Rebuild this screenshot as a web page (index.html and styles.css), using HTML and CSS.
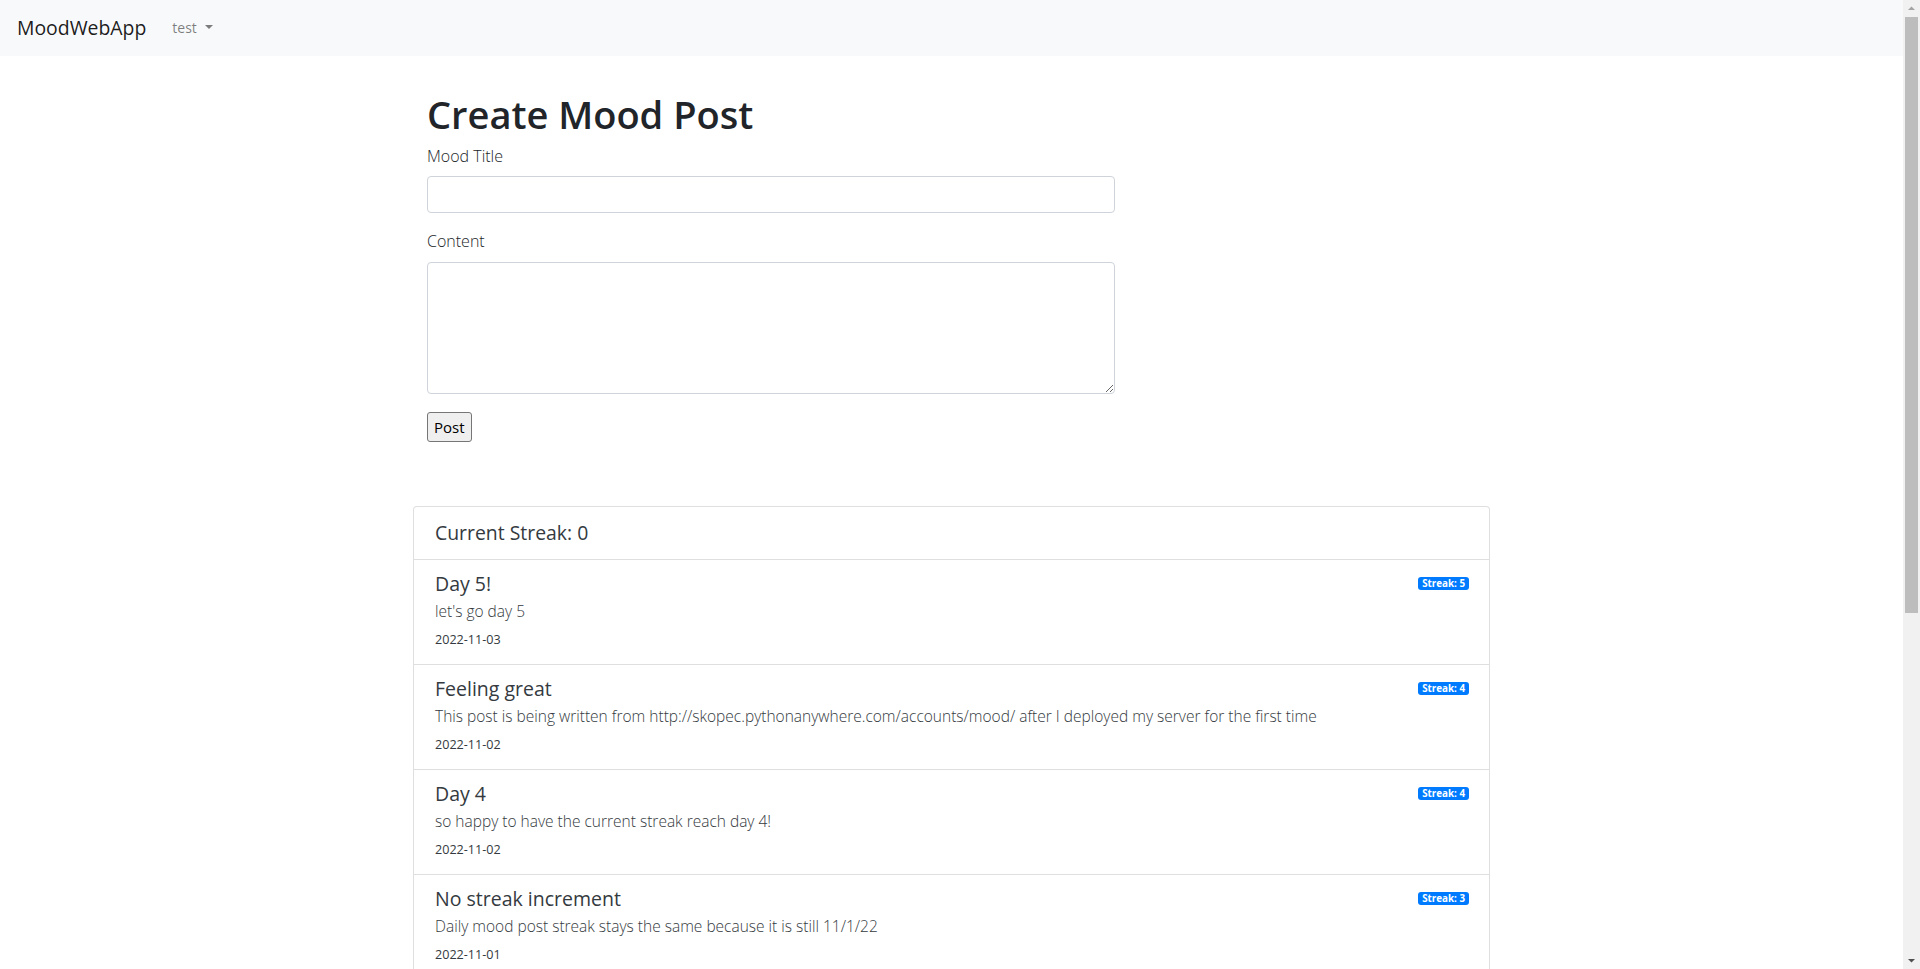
FILE: index.html
```html
<!DOCTYPE html>
<html lang="en">
<head>
<meta charset="utf-8">
<title>MoodWebApp</title>
<link rel="stylesheet" href="styles.css">
</head>
<body>
<nav class="navbar">
  <a class="brand" href="#">MoodWebApp</a>
  <a class="nav-link" href="#">test<span class="caret"></span></a>
</nav>

<main class="page">
  <section class="compose">
    <h1 class="page-title">Create Mood Post</h1>
    <form class="mood-form">
      <label class="field-label" for="title">Mood Title</label>
      <input class="field-input" type="text" id="title" name="title">
      <label class="field-label field-label-second" for="content">Content</label>
      <textarea class="field-area" id="content" name="content"></textarea>
      <button class="post-btn" type="button">Post</button>
    </form>
  </section>

  <section class="card">
    <div class="card-header">Current Streak: 0</div>
    <ul class="post-list">
      <li class="post-item">
        <div class="post-head"><h5 class="post-title">Day 5!</h5><span class="badge">Streak: 5</span></div>
        <p class="post-body">let's go day 5</p>
        <small class="post-date">2022-11-03</small>
      </li>
      <li class="post-item">
        <div class="post-head"><h5 class="post-title">Feeling great</h5><span class="badge">Streak: 4</span></div>
        <p class="post-body">This post is being written from http://skopec.pythonanywhere.com/accounts/mood/ after I deployed my server for the first time</p>
        <small class="post-date">2022-11-02</small>
      </li>
      <li class="post-item">
        <div class="post-head"><h5 class="post-title">Day 4</h5><span class="badge">Streak: 4</span></div>
        <p class="post-body">so happy to have the current streak reach day 4!</p>
        <small class="post-date">2022-11-02</small>
      </li>
      <li class="post-item">
        <div class="post-head"><h5 class="post-title">No streak increment</h5><span class="badge">Streak: 3</span></div>
        <p class="post-body">Daily mood post streak stays the same because it is still 11/1/22</p>
        <small class="post-date">2022-11-01</small>
      </li>
    </ul>
  </section>
</main>

<div class="scrollbar" aria-hidden="true">
  <div class="sb-button">
    <svg width="17" height="17" viewBox="0 0 17 17"><path d="M5 10 L8.5 6.5 L12 10 Z" fill="#a3a3a3"/></svg>
  </div>
  <div class="sb-track"><div class="sb-thumb"></div></div>
  <div class="sb-button">
    <svg width="17" height="17" viewBox="0 0 17 17"><path d="M5 7 L8.5 10.5 L12 7 Z" fill="#505050"/></svg>
  </div>
</div>
</body>
</html>
```

FILE: styles.css
```css
body {
  margin: 0 17px 0 0;
  font-family: "Open Sans", "Noto Sans", sans-serif;
  font-size: 15.5px;
  line-height: 24px;
  color: #212529;
  background: #fff;
}

/* navbar */
.navbar {
  height: 56px;
  box-sizing: border-box;
  background: #f8f9fa;
  display: flex;
  align-items: center;
  padding: 0 16px 0 17px;
}

.brand {
  font-size: 19.4px;
  line-height: 30px;
  color: rgba(0, 0, 0, 0.9);
  text-decoration: none;
  margin-right: 26px;
}

.nav-link {
  font-size: 14px;
  line-height: 24px;
  color: rgba(0, 0, 0, 0.5);
  text-decoration: none;
  display: flex;
  align-items: center;
}

.caret {
  display: inline-block;
  width: 0;
  height: 0;
  margin-left: 8px;
  border-top: 4px solid rgba(0, 0, 0, 0.5);
  border-left: 4.5px solid transparent;
  border-right: 4.5px solid transparent;
  margin-top: -2px;
}

/* page */
.page {
  width: 1077px;
  margin: 0 auto;
}

.compose {
  width: 688px;
  margin-left: 14px;
}

.page-title {
  margin: 34px 0 6px;
  font-size: 38px;
  line-height: 48px;
  font-weight: 600;
  color: #212529;
}

.mood-form {
  display: flex;
  flex-direction: column;
  align-items: flex-start;
}

.field-label {
  font-size: 16px;
  font-weight: 300;
  line-height: 24px;
  margin-bottom: 8px;
}

.field-label-second {
  margin-top: 16px;
  margin-bottom: 9px;
}

.field-input,
.field-area {
  box-sizing: border-box;
  width: 100%;
  border: 1px solid #ced4da;
  border-radius: 4px;
  font: inherit;
  padding: 6px 12px;
  background: #fff;
}

.field-input {
  height: 37px;
}

.field-area {
  height: 132px;
  resize: vertical;
}

.post-btn {
  margin-top: 18px;
  font-family: "Open Sans", "Noto Sans", sans-serif;
  font-weight: 400;
  font-size: 15px;
  line-height: 24px;
  height: 30px;
  padding: 2px 6px;
  background: #efefef;
  border: 1px solid #767676;
  border-radius: 3px;
  color: #000;
}

/* card */
.card {
  margin-top: 64px;
  border: 1px solid rgba(0, 0, 0, 0.125);
  border-radius: 4px;
  background: #fff;
}

.card-header {
  padding: 14px 20px 14px 21px;
  font-size: 19.4px;
  line-height: 24px;
  font-weight: 400;
  color: #343a40;
  border-bottom: 1px solid rgba(0, 0, 0, 0.125);
}

.post-list {
  list-style: none;
  margin: 0;
  padding: 0;
}

.post-item {
  padding: 12px 20px 14px 21px;
  border-bottom: 1px solid rgba(0, 0, 0, 0.125);
  display: flex;
  flex-direction: column;
  align-items: flex-start;
}

.post-head {
  display: flex;
  justify-content: space-between;
  align-items: flex-start;
  width: 100%;
}

.post-title {
  margin: 0;
  font-size: 19.5px;
  line-height: 24px;
  font-weight: 400;
  color: #343a40;
}

.badge {
  margin-top: 5px;
  background: #007bff;
  color: #fff;
  font-size: 9.8px;
  line-height: 11px;
  font-weight: 700;
  padding: 1px 4px;
  border-radius: 3px;
}

.post-body {
  margin: 3px 0 0;
  font-weight: 300;
  line-height: 24px;
  color: #343a40;
}

.post-date {
  margin-top: 7px;
  font-size: 12.6px;
  line-height: 20px;
  font-weight: 400;
  color: #343a40;
}

/* simulated window scrollbar (overlays the right edge) */
.scrollbar {
  position: fixed;
  top: 0;
  right: 0;
  bottom: 0;
  width: 17px;
  background: #f1f1f1;
  display: flex;
  flex-direction: column;
}

.sb-button {
  height: 17px;
  flex: none;
}

.sb-button svg {
  display: block;
}

.sb-track {
  flex: 1;
  padding: 0 2px;
}

.sb-thumb {
  height: 596px;
  background: #bdbdbd;
}
```
